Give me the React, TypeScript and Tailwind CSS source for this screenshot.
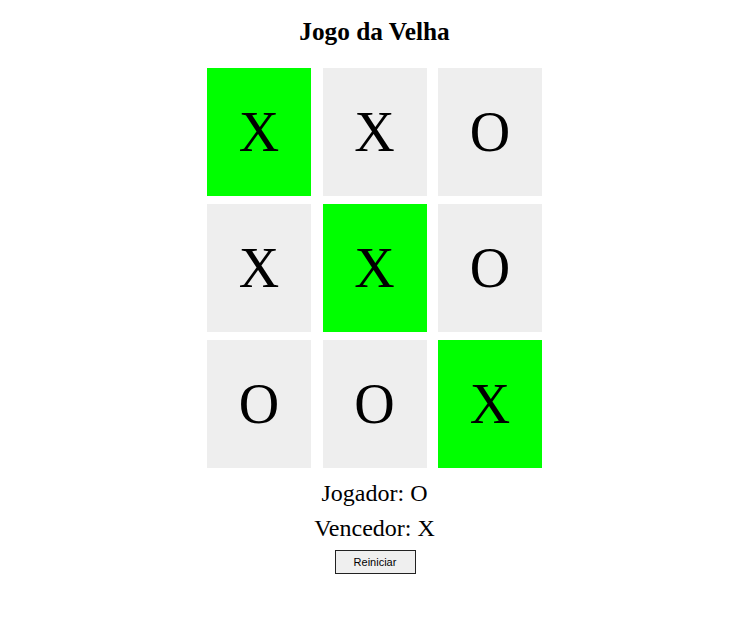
const board = ["X", "X", "O", "X", "X", "O", "O", "O", "X"];
const winLine = [0, 4, 8];

export default function App() {
  return (
    <div className="min-h-screen bg-white font-['Liberation_Serif',serif] text-black">
      <div className="flex flex-col items-center pt-[16px]">
        <h1 className="text-[25.3px] font-bold leading-[31px]">Jogo da Velha</h1>
        <div className="mt-[21px] grid grid-cols-[104px_104px_104px] gap-x-[11.5px] gap-y-[8px]">
          {board.map((cell, i) => (
            <div
              key={i}
              className={`flex h-[128px] items-center justify-center text-[56px] leading-none ${
                winLine.includes(i) ? "bg-[#00ff00]" : "bg-[#eeeeee]"
              }`}
            >
              {cell}
            </div>
          ))}
        </div>
        <p className="mt-[11px] text-[24px] leading-[28px]">Jogador: O</p>
        <p className="mt-[7px] text-[24px] leading-[28px]">Vencedor: X</p>
        <button className="ml-[1px] mt-[8px] h-[24px] w-[81px] border border-[#222] bg-[#efefef] font-['Liberation_Sans',Arial,sans-serif] text-[11px] leading-none">
          Reiniciar
        </button>
      </div>
    </div>
  );
}
